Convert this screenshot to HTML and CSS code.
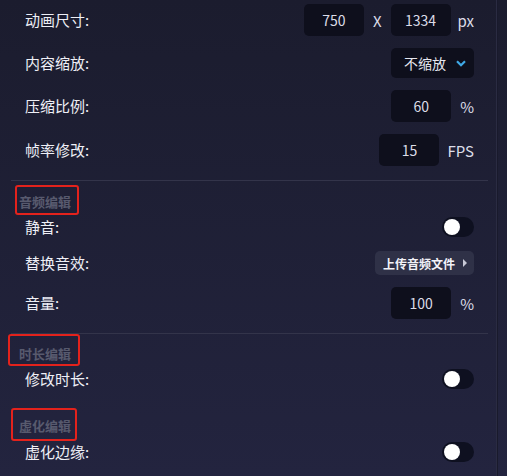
FILE: index.html
```html
<!DOCTYPE html>
<html lang="zh-CN">
<head>
    <meta charset="UTF-8">
    <meta name="viewport" content="width=device-width, initial-scale=1.0">
    <title>动画编辑</title>
    <link rel="stylesheet" href="styles.css">
</head>
<body>
    <div class="wrap">
        <main class="panel">
            <div class="row r1">
                <label>动画尺寸:</label>
                <div class="ctrl">
                    <span class="num">750</span>
                    <span class="unit gap9">X</span>
                    <span class="num gap9">1334</span>
                    <span class="unit gap7">px</span>
                </div>
            </div>
            <div class="row r2">
                <label>内容缩放:</label>
                <div class="select">不缩放
                    <svg width="10" height="7" viewBox="0 0 10 7"><path d="M1 1.2 L5 5.2 L9 1.2" fill="none" stroke="#3fa9e6" stroke-width="2.2"/></svg>
                </div>
            </div>
            <div class="row r3">
                <label>压缩比例:</label>
                <div class="ctrl">
                    <span class="num">60</span>
                    <span class="unit gap9">%</span>
                </div>
            </div>
            <div class="row r4">
                <label>帧率修改:</label>
                <div class="ctrl">
                    <span class="num">15</span>
                    <span class="unit gap8">FPS</span>
                </div>
            </div>

            <hr class="line first">
            <div class="sec s1"><span>音频编辑</span></div>
            <div class="row r5">
                <label>静音:</label>
                <span class="switch"></span>
            </div>
            <div class="row r6">
                <label>替换音效:</label>
                <div class="upload">上传音频文件 <i class="tri"></i></div>
            </div>
            <div class="row r7">
                <label>音量:</label>
                <div class="ctrl">
                    <span class="num">100</span>
                    <span class="unit gap9">%</span>
                </div>
            </div>

            <hr class="line second">
            <div class="sec s2"><span>时长编辑</span></div>
            <div class="row r8">
                <label>修改时长:</label>
                <span class="switch"></span>
            </div>

            <div class="sec s3"><span>虚化编辑</span></div>
            <div class="row r9">
                <label>虚化边缘:</label>
                <span class="switch"></span>
            </div>
        </main>
        <div class="scroll"></div>
    </div>
</body>
</html>
```

FILE: styles.css
```css
*{
    margin: 0;
    padding: 0;
    box-sizing: border-box;
}
body{
    font-family: "Noto Sans CJK SC", "Noto Sans", sans-serif;
    color: #e6e7f0;
}
.wrap{
    display: flex;
    height: 476px;
    overflow: hidden;
    background: linear-gradient(#1b1c2e, #23243f);
}
.panel{
    width: 497px;
    border-right: 1px solid #2a2b42;
    display: flex;
    flex-direction: column;
}
.scroll{
    flex: 1;
    border-left: 1px solid #191a2c;
}

.row{
    display: flex;
    align-items: center;
    justify-content: space-between;
    padding: 0 22px 0 25px;
}
.row label{
    font-size: 15px;
    line-height: 20px;
    color: #eeeff6;
}
.r1{ height: 40px; }
.r2{ height: 40px; margin-top: 3px; }
.r3{ height: 40px; margin-top: 3px; }
.r4{ height: 40px; margin-top: 4px; }
.r5{ height: 20px; margin-top: 2px; }
.r6{ height: 24px; margin-top: 14px; }
.r7{ height: 32px; margin-top: 12px; }
.r8{ height: 20px; margin-top: 3px; }
.r9{ height: 20px; margin-top: 1px; }

.ctrl{
    display: flex;
    align-items: center;
}
.num{
    width: 60px;
    height: 32px;
    border-radius: 5px;
    background: #0e0f1c;
    font-size: 14px;
    line-height: 32px;
    text-align: center;
    color: #dcdde8;
}
.unit{
    font-size: 15px;
    color: #dcdde8;
}
.gap7{ margin-left: 7px; }
.gap8{ margin-left: 8px; }
.gap9{ margin-left: 9px; }

.select{
    width: 83px;
    height: 30px;
    border-radius: 5px;
    background: #0e0f1c;
    font-size: 14px;
    display: flex;
    align-items: center;
    padding-left: 13px;
    gap: 10px;
}

.switch{
    position: relative;
    width: 32px;
    height: 20px;
    border-radius: 10px;
    background: #0e1020;
}
.switch::after{
    content: "";
    position: absolute;
    left: 2px;
    top: 2px;
    width: 16px;
    height: 16px;
    border-radius: 50%;
    background: #fff;
}

.upload{
    width: 99px;
    height: 24px;
    border-radius: 5px;
    background: #2f3147;
    font-size: 12px;
    font-weight: bold;
    color: #f2f2f8;
    display: flex;
    align-items: center;
    padding-left: 8px;
    gap: 4px;
}
.tri{
    width: 0;
    height: 0;
    border-top: 4px solid transparent;
    border-bottom: 4px solid transparent;
    border-left: 4px solid #c8c9d6;
    margin-left: 4px;
}

.line{
    border: 0;
    border-top: 1px solid #33344a;
    margin: 0 8px 0 11px;
}
.first{ margin-top: 10px; }
.second{ margin-top: 14px; }

.sec span{
    display: inline-block;
    border: 2px solid #e3221c;
    border-radius: 3px;
    font-size: 13px;
    font-weight: bold;
    color: #585a6e;
}
.s1{ margin-top: 4px; }
.s1 span{
    margin-left: 15px;
    width: 64px;
    height: 30px;
    padding: 5px 0 0 2px;
}
.s2 span{
    margin-left: 8px;
    width: 72px;
    height: 32px;
    padding: 8px 0 0 9px;
}
.s3{ margin-top: 19px; }
.s3 span{
    margin-left: 11px;
    width: 66px;
    height: 33px;
    padding: 6px 0 0 6px;
}
```
